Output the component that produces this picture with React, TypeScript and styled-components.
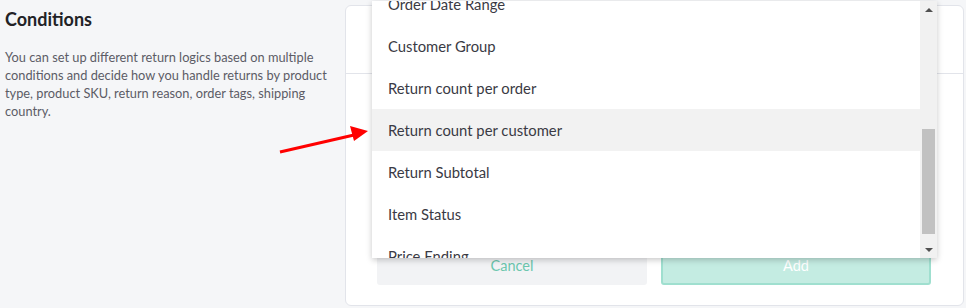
import styled, { createGlobalStyle } from "styled-components";

const GlobalStyle = createGlobalStyle`
    html, body {
        margin: 0;
        padding: 0;
        background: #f5f6f8;
        font-family: Lato, "Open Sans", sans-serif;
    }
`;

/* whole screen: description on the left, card on the right */
const Page = styled.div`
    position: relative;
    width: 966px;
    height: 308px;
    display: flex;
    overflow: hidden;
    background: #f5f6f8;
`;

const Intro = styled.section`
    width: 340px;
    flex: none;
    padding: 6px 5px 0 5px;
    box-sizing: border-box;
`;

const Title = styled.h2`
    margin: 0;
    font-size: 18px;
    font-weight: 700;
    color: #222226;
    line-height: 26px;
`;

const Description = styled.p`
    margin: 16px 0 0 0;
    width: 330px;
    font-size: 12.8px;
    line-height: 18px;
    color: #5c5c66;
`;

/* card holding the condition form */
const Card = styled.section`
    margin: 5px 2px 2px 5px;
    flex: 1;
    background: #fff;
    border: 1px solid #e2e4ea;
    border-radius: 6px;
    display: flex;
    flex-direction: column;
`;

const CardHeader = styled.div`
    height: 67px;
    border-bottom: 1px solid #e2e4ea;
`;

const CardBody = styled.div`
    flex: 1;
    display: flex;
    align-items: flex-end;
    padding: 0 32px 20px 31px;
`;

const Actions = styled.div`
    width: 100%;
    display: grid;
    grid-template-columns: 1fr 1fr;
    gap: 14px;
`;

const Button = styled.button<{ $primary?: boolean }>`
    height: 36px;
    padding: 0 0 4px 0;
    border-radius: 3px;
    font-family: inherit;
    font-size: 14.5px;
    cursor: pointer;
    border: 2px solid ${(p) => (p.$primary ? "#9fdfcf" : "#f2f3f5")};
    background: ${(p) => (p.$primary ? "#c4ece2" : "#f2f3f5")};
    color: ${(p) => (p.$primary ? "#ffffff" : "#6cc7ae")};
`;

/* open select menu laid over the card */
const Menu = styled.div`
    position: absolute;
    left: 372px;
    top: 1px;
    width: 565px;
    height: 257px;
    background: #fff;
    box-shadow: 0 2px 6px rgba(0, 0, 0, 0.22);
    display: flex;
    overflow: hidden;
`;

const OptionViewport = styled.div`
    flex: 1;
    overflow: hidden;
`;

const OptionList = styled.ul`
    list-style: none;
    margin: -18px 0 0 0;
    padding: 0;
`;

const Option = styled.li<{ $active?: boolean }>`
    height: 42px;
    display: flex;
    align-items: center;
    padding: 0 16px 1px 16px;
    box-sizing: border-box;
    font-size: 14.8px;
    color: #3a3a44;
    background: ${(p) => (p.$active ? "#f2f2f2" : "#fff")};
`;

const Scrollbar = styled.div`
    width: 17px;
    flex: none;
    background: #f1f1f1;
    display: flex;
    flex-direction: column;
    align-items: center;
`;

const ScrollArrow = styled.div<{ $down?: boolean }>`
    height: 17px;
    width: 17px;
    display: flex;
    align-items: center;
    justify-content: center;
    &::after {
        content: "";
        border-left: 4px solid transparent;
        border-right: 4px solid transparent;
        ${(p) =>
            p.$down
                ? "border-top: 4px solid #505050;"
                : "border-bottom: 4px solid #505050;"}
    }
`;

const ScrollTrack = styled.div`
    flex: 1;
    width: 100%;
    padding: 111px 2px 7px 2px;
    box-sizing: border-box;
    display: flex;
`;

const ScrollThumb = styled.div`
    flex: 1;
    background: #c1c1c1;
`;

const Pointer = styled.svg`
    position: absolute;
    left: 276px;
    top: 124px;
`;

const options = [
    "Order Date Range",
    "Customer Group",
    "Return count per order",
    "Return count per customer",
    "Return Subtotal",
    "Item Status",
    "Price Ending",
];

export default function App() {
    return (
        <>
            <GlobalStyle />
            <Page>
                <Intro>
                    <Title>Conditions</Title>
                    <Description>
                        You can set up different return logics based on multiple conditions and
                        decide how you handle returns by product type, product SKU, return reason,
                        order tags, shipping country.
                    </Description>
                </Intro>

                <Card>
                    <CardHeader />
                    <CardBody>
                        <Actions>
                            <Button>Cancel</Button>
                            <Button $primary>Add</Button>
                        </Actions>
                    </CardBody>
                </Card>

                <Menu>
                    <OptionViewport>
                        <OptionList>
                            {options.map((o) => (
                                <Option key={o} $active={o === "Return count per customer"}>
                                    {o}
                                </Option>
                            ))}
                        </OptionList>
                    </OptionViewport>
                    <Scrollbar>
                        <ScrollArrow />
                        <ScrollTrack>
                            <ScrollThumb />
                        </ScrollTrack>
                        <ScrollArrow $down />
                    </Scrollbar>
                </Menu>

                <Pointer width="96" height="34" viewBox="0 0 96 34">
                    <line x1="4" y1="28" x2="78" y2="11" stroke="#ff0000" strokeWidth="3" />
                    <polygon points="92,7 74,2 78,17" fill="#ff0000" />
                </Pointer>
            </Page>
        </>
    );
}
